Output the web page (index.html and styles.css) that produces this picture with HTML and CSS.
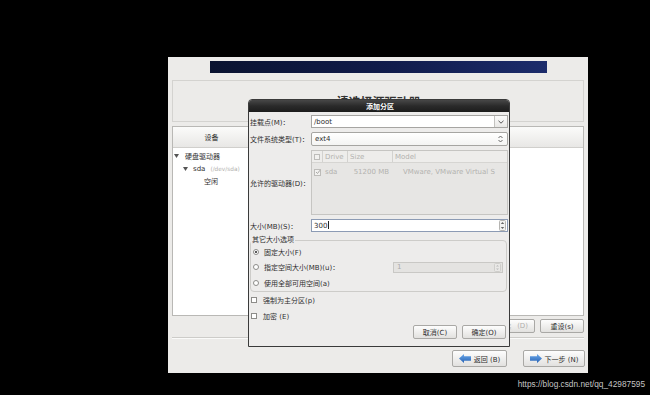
FILE: index.html
```html
<!DOCTYPE html>
<html lang="zh-CN">
<head>
<meta charset="utf-8">
<title>添加分区</title>
<link rel="stylesheet" href="styles.css">
</head>
<body>
<div class="screen">
  <div class="window">
    <div class="banner"></div>
    <div class="title-frame"><span class="title">请选择源驱动器</span></div>
    <div class="device-panel">
      <div class="panel-head">
        <div class="col-dev">设备</div>
        <div class="col-rest"></div>
      </div>
      <div class="tree">
        <div class="tree-row lvl0">
          <svg class="tri" width="5" height="4" viewBox="0 0 5 4"><polygon points="0,0 5,0 2.5,4" fill="#555"/></svg>
          <span>硬盘驱动器</span>
        </div>
        <div class="tree-row lvl1">
          <svg class="tri" width="5" height="4" viewBox="0 0 5 4"><polygon points="0,0 5,0 2.5,4" fill="#555"/></svg>
          <span>sda</span><span class="dev-path">(/dev/sda)</span>
        </div>
        <div class="tree-row lvl2"><span>空闲</span></div>
      </div>
    </div>
    <div class="actions">
      <div class="btn btn-del"><span class="del-hidden">删除</span><span>(D)</span></div>
      <div class="btn btn-reset">重设(s)</div>
    </div>
    <div class="sep"></div>
    <div class="nav">
      <div class="btn nav-btn btn-back">
        <svg width="12" height="9" viewBox="0 0 12 9"><defs><linearGradient id="ga" x1="0" y1="0" x2="0" y2="1"><stop offset="0" stop-color="#6aa8ea"/><stop offset="1" stop-color="#2762b4"/></linearGradient></defs><polygon points="0,4.5 5,0 5,2.3 12,2.3 12,6.7 5,6.7 5,9" fill="url(#ga)"/></svg>
        <span>返回 (B)</span>
      </div>
      <div class="btn nav-btn btn-next">
        <svg width="12" height="9" viewBox="0 0 12 9"><defs><linearGradient id="gb" x1="0" y1="0" x2="0" y2="1"><stop offset="0" stop-color="#6aa8ea"/><stop offset="1" stop-color="#2762b4"/></linearGradient></defs><polygon points="12,4.5 7,0 7,2.3 0,2.3 0,6.7 7,6.7 7,9" fill="url(#gb)"/></svg>
        <span>下一步 (N)</span>
      </div>
    </div>
  </div>

  <div class="dialog">
    <div class="dlg-title">添加分区</div>
    <div class="dlg-body">
      <div class="form-grid">
        <div class="lbl">挂载点(M)：</div>
        <div class="entry combo-entry">
          <span class="entry-text">/boot</span>
          <span class="combo-btn"><svg width="6" height="4" viewBox="0 0 6 4"><polyline points="0.5,0.8 3,3.2 5.5,0.8" fill="none" stroke="#555" stroke-width="1"/></svg></span>
        </div>

        <div class="lbl">文件系统类型(T)：</div>
        <div class="combo">
          <span class="entry-text">ext4</span>
          <svg class="updown" width="5" height="8" viewBox="0 0 5 8"><polyline points="0.5,3 2.5,1 4.5,3" fill="none" stroke="#555" stroke-width="0.9"/><polyline points="0.5,5 2.5,7 4.5,5" fill="none" stroke="#555" stroke-width="0.9"/></svg>
        </div>

        <div class="lbl">允许的驱动器(D)：</div>
        <div class="drives">
          <div class="drives-head">
            <div class="dcell"><span class="cb cb-dis"></span></div>
            <div class="dcell">Drive</div>
            <div class="dcell">Size</div>
            <div class="dcell last">Model</div>
          </div>
          <div class="drives-row">
            <div class="rcell"><span class="cb cb-dis checked"><svg width="6" height="6" viewBox="0 0 6 6"><polyline points="1,3 2.5,4.5 5,1.2" fill="none" stroke="#a9a8a5" stroke-width="1"/></svg></span></div>
            <div class="rcell">sda</div>
            <div class="rcell size">51200 MB</div>
            <div class="rcell model">VMware, VMware Virtual S</div>
          </div>
        </div>

        <div class="lbl">大小(MB)(S)：</div>
        <div class="entry spin focus">
          <span class="entry-text">300<span class="caret"></span></span>
          <svg class="spin-arrows" width="7" height="11" viewBox="0 0 7 11"><rect x="0.5" y="0.5" width="6" height="10" rx="1" fill="#f2f2f1" stroke="#b5b4b1"/><polygon points="1.8,4 3.5,2 5.2,4" fill="#666"/><polygon points="1.8,7 3.5,9 5.2,7" fill="#666"/></svg>
        </div>
      </div>

      <fieldset class="group">
        <legend>其它大小选项</legend>
        <div class="opt">
          <span class="radio on"></span><span>固定大小(F)</span>
        </div>
        <div class="opt">
          <span class="radio"></span><span>指定空间大小(MB)(u)：</span>
          <div class="entry spin disabled">
            <span class="entry-text">1</span>
            <svg class="spin-arrows" width="7" height="9" viewBox="0 0 7 9"><rect x="0.5" y="0.5" width="6" height="8" rx="1" fill="#e9e8e6" stroke="#cfcecb"/><polygon points="2,3.5 3.5,2 5,3.5" fill="#bbb"/><polygon points="2,5.5 3.5,7 5,5.5" fill="#bbb"/></svg>
          </div>
        </div>
        <div class="opt">
          <span class="radio"></span><span>使用全部可用空间(a)</span>
        </div>
      </fieldset>

      <div class="check-row"><span class="cb"></span><span>强制为主分区(p)</span></div>
      <div class="check-row"><span class="cb"></span><span>加密 (E)</span></div>

      <div class="dlg-buttons">
        <div class="btn dlg-btn">取消(C)</div>
        <div class="btn dlg-btn">确定(O)</div>
      </div>
    </div>
  </div>

  <div class="watermark">https://blog.csdn.net/qq_42987595</div>
</div>
</body>
</html>
```

FILE: styles.css
```css
* { box-sizing: border-box; }
html, body { margin: 0; padding: 0; background: #000; }
body {
  font-family: "DejaVu Sans", "Noto Sans CJK SC", sans-serif;
  font-size: 7px;
  color: #2f2f2f;
}
.screen {
  position: relative;
  width: 650px;
  height: 395px;
  padding: 57px 0 0 168px;
  overflow: hidden;
  background: #000;
}

/* ---------- main installer window ---------- */
.window {
  width: 420px;
  height: 316px;
  background: #ecebe9;
  padding: 4px;
  display: flex;
  flex-direction: column;
}
.banner {
  height: 12px;
  margin: 0 37px 0 38px;
  background: linear-gradient(90deg, #0a1330, #111c4c 55%, #1c2c6b);
}
.title-frame {
  margin-top: 7px;
  height: 42px;
  border: 1px solid #d4d3d0;
  display: flex;
  align-items: center;
  justify-content: center;
}
.title {
  font-size: 12px;
  font-weight: bold;
  color: #333;
  margin-left: 1px;
}
.device-panel {
  margin-top: 4px;
  height: 190px;
  border: 1px solid #b9b8b5;
  background: #fff;
  display: flex;
  flex-direction: column;
}
.panel-head {
  height: 21px;
  flex: none;
  display: flex;
  background: linear-gradient(#fbfbfa, #e8e7e5);
  border-bottom: 1px solid #d0cfcc;
}
.col-dev {
  width: 78px;
  border-right: 1px solid #d3d2cf;
  display: flex;
  align-items: center;
  justify-content: center;
}
.col-rest { flex: 1; }
.tree { padding-top: 2px; }
.tree-row {
  height: 12.5px;
  display: flex;
  align-items: center;
}
.tree-row.lvl0 { padding-left: 1px; }
.tree-row.lvl0 .tri { margin-right: 6px; }
.tree-row.lvl1 { padding-left: 10px; }
.tree-row.lvl1 .tri { margin-right: 5px; }
.tree-row.lvl2 { padding-left: 31px; }
.dev-path {
  font-size: 5.8px;
  color: #b2b1ae;
  margin-left: 5px;
}

.btn {
  border: 1px solid #a9a8a5;
  border-radius: 2px;
  background: linear-gradient(#fdfdfd, #e2e1df);
  display: flex;
  align-items: center;
  justify-content: center;
  white-space: nowrap;
}
.actions {
  margin-top: 3px;
  height: 14px;
  display: flex;
  justify-content: flex-end;
  gap: 5px;
}
.btn-del {
  width: 50px;
  color: #b0afac;
  justify-content: flex-end;
  padding-right: 6px;
}
.del-hidden { margin-right: 6px; }
.btn-reset { width: 44px; }
.sep {
  margin-top: 4px;
  height: 2px;
  border-top: 1px solid #cdccc9;
  border-bottom: 1px solid #fafaf9;
}
.nav {
  margin-top: 11px;
  margin-right: -1px;
  display: flex;
  justify-content: flex-end;
  gap: 16px;
}
.nav-btn { height: 17px; gap: 3px; }
.btn-back { width: 55px; }
.btn-next { width: 62px; }

/* ---------- modal dialog ---------- */
.dialog {
  position: absolute;
  left: 248px;
  top: 99px;
  width: 262px;
  height: 248px;
  background: #edeceb;
  border: 1px solid #3a3a3a;
  border-radius: 4px 4px 0 0;
  display: flex;
  flex-direction: column;
  overflow: hidden;
}
.dlg-title {
  height: 12px;
  flex: none;
  background: linear-gradient(#474747, #2a2a2a 50%, #1c1c1c);
  color: #fff;
  font-weight: bold;
  display: flex;
  align-items: center;
  justify-content: center;
  padding-left: 2px;
}
.dlg-body {
  flex: 1;
  padding: 3px 1px 0 1px;
  display: flex;
  flex-direction: column;
}
.form-grid {
  display: grid;
  grid-template-columns: 61px 197px;
  grid-template-rows: 13px 14px 65px 13px;
  row-gap: 4px;
}
.lbl {
  display: flex;
  align-items: center;
  white-space: nowrap;
}
.entry {
  background: #fff;
  border: 1px solid #a6a5a2;
  display: flex;
  align-items: center;
  padding-left: 2px;
}
.entry-text { flex: 1; white-space: nowrap; }
.combo-entry { padding-right: 0; }
.combo-btn {
  width: 13px;
  align-self: stretch;
  border-left: 1px solid #c3c2bf;
  background: linear-gradient(#fbfbfb, #e9e8e6);
  display: flex;
  align-items: center;
  justify-content: center;
}
.combo {
  border: 1px solid #a6a5a2;
  border-radius: 2px;
  background: linear-gradient(#ffffff, #f4f4f3);
  display: flex;
  align-items: center;
  padding: 0 4px 0 3px;
}
.drives {
  border: 1px solid #c6c5c2;
  background: #e7e6e4;
  color: #b3b2af;
}
.drives-head {
  height: 12px;
  display: grid;
  grid-template-columns: 11px 25px 45px 1fr;
  background: #eeedeb;
  border-bottom: 1px solid #d6d5d2;
}
.dcell {
  display: flex;
  align-items: center;
  padding-left: 2px;
  border-right: 1px solid #d3d2cf;
}
.dcell.last { border-right: none; }
.drives-row {
  margin-top: 3px;
  height: 12px;
  display: grid;
  grid-template-columns: 11px 25px 45px 1fr;
}
.rcell {
  display: flex;
  align-items: center;
  padding-left: 2px;
  white-space: nowrap;
}
.rcell.size { justify-content: flex-end; padding-right: 4px; }
.rcell.model { padding-left: 10px; }

.cb {
  width: 6px;
  height: 6px;
  flex: none;
  border: 1px solid #8d8c89;
  background: #fff;
  display: inline-flex;
  align-items: center;
  justify-content: center;
}
.cb svg { flex: none; }
.cb-dis { border-color: #bdbcb9; background: #f2f1ef; }
.cb-dis.checked { width: 7px; height: 7px; }

.spin { padding-right: 1px; }
.spin.focus { border-color: #8c9bb4; }
.caret {
  display: inline-block;
  width: 1px;
  height: 8px;
  background: #222;
  vertical-align: -1px;
  margin-left: 0.5px;
}
.spin-arrows { flex: none; }

.group {
  margin: 4px 1px 0 0;
  padding: 0 2px 0 2px;
  border: 1px solid #cdccc9;
  border-radius: 4px;
  min-width: 0;
}
.group legend {
  padding: 0 1px;
  margin-left: -2px;
  line-height: 8px;
}
.opt {
  height: 15.5px;
  display: flex;
  align-items: center;
}
.radio {
  width: 6px;
  height: 6px;
  flex: none;
  border: 1px solid #8d8c89;
  border-radius: 50%;
  background: #fff;
  margin-right: 5px;
  position: relative;
}
.radio.on::after {
  content: "";
  position: absolute;
  left: 1px;
  top: 1px;
  width: 2px;
  height: 2px;
  border-radius: 50%;
  background: #222;
}
.spin.disabled {
  margin-left: auto;
  margin-right: 1px;
  width: 110px;
  height: 11px;
  background: #e4e3e1;
  border-color: #c9c8c5;
  color: #aaa;
  padding-left: 3px;
}
.check-row {
  height: 16px;
  display: flex;
  align-items: center;
  padding-left: 1px;
}
.check-row .cb { margin-right: 6px; }
.dlg-buttons {
  margin-top: 1px;
  margin-right: 2px;
  display: flex;
  justify-content: flex-end;
  gap: 5px;
}
.dlg-btn { width: 44px; height: 14px; }

.watermark {
  position: absolute;
  right: 5px;
  top: 379px;
  font-family: "Liberation Sans", sans-serif;
  font-size: 8.3px;
  color: #c4c4c4;
}
```
